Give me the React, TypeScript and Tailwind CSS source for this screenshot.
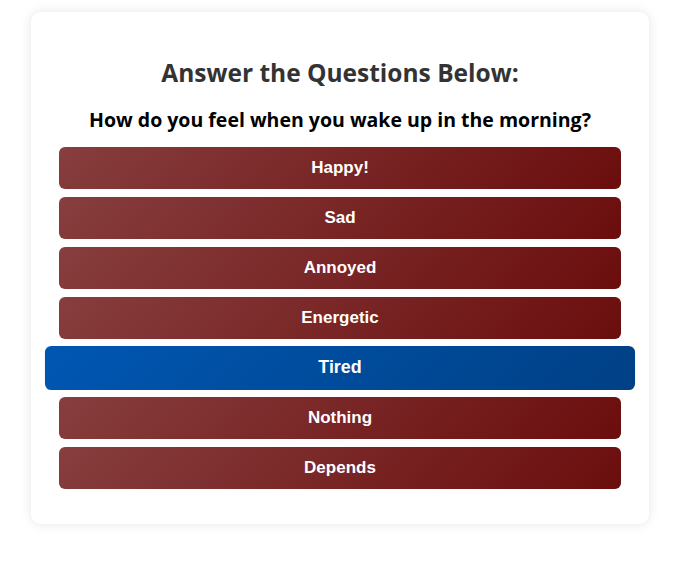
import React from "react";

const options = ["Happy!", "Sad", "Annoyed", "Energetic", "Tired", "Nothing", "Depends"];

export default function App() {
  return (
    <div className="min-h-[564px] w-full bg-white pt-[12px]">
      <div className="ml-[31px] w-[618px] rounded-[10px] bg-white px-[28px] pt-[46px] pb-[35px] shadow-[0_0_12px_rgba(0,0,0,0.10)]">
        <h1
          className="text-center text-[24.5px] font-bold leading-[30px] text-[#333333]"
          style={{ fontFamily: '"Open Sans", "DejaVu Sans", sans-serif' }}
        >
          Answer the Questions Below:
        </h1>
        <h2
          className="mt-[19px] text-center text-[19.5px] font-bold leading-[26px] text-black"
          style={{ fontFamily: '"Open Sans", "DejaVu Sans", sans-serif' }}
        >
          How do you feel when you wake up in the morning?
        </h2>
        <div className="mt-[14px] flex flex-col gap-[8px]">
          {options.map((o) => (
            <button
              key={o}
              className={
                o === "Tired"
                  ? "h-[42px] w-full scale-[1.05] rounded-[6px] bg-[linear-gradient(135deg,#0057b3,#004085)] text-[17px] font-bold text-white"
                  : "h-[42px] w-full rounded-[6px] bg-[linear-gradient(135deg,#873e3e,#6b0d0d)] text-[17px] font-bold text-white"
              }
              style={{ fontFamily: '"Liberation Sans", Arial, sans-serif' }}
            >
              {o}
            </button>
          ))}
        </div>
      </div>
    </div>
  );
}
